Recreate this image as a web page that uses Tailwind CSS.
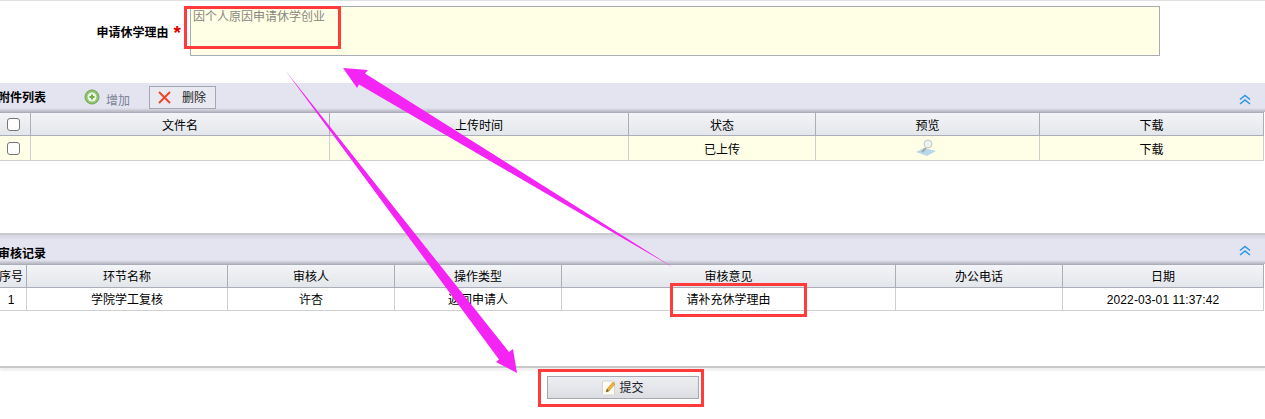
<!DOCTYPE html>
<html lang="zh-CN">
<head>
    <meta charset="UTF-8" />
    <meta name="viewport" content="width=device-width, initial-scale=1.0" />
    <title>休学申请</title>
    <script src="https://cdn.jsdelivr.net/npm/@tailwindcss/browser@4"></script>
</head>
<body class="bg-white">
<div class="relative w-[1265px] h-[419px] overflow-hidden bg-white text-black text-[12px] leading-[16px] font-['Liberation_Sans','Noto_Sans_CJK_SC',sans-serif]">

    <!-- form row -->
    <div class="h-px bg-[#e0e0e0]"></div>
    <div class="flex mt-[5px] h-[50px]">
        <div class="w-[190px] shrink-0 flex justify-end items-center pr-[9px] pt-[3px]">
            <span class="font-bold mr-[5px]">申请休学理由</span>
            <span class="text-[#e00000] font-bold text-[19px] leading-[16px] mt-[1px]">*</span>
        </div>
        <textarea class="w-[970px] h-[50px] resize-none border border-[#a9abb5] bg-[#ffffe6] pl-[2px] pr-[3px] pt-[2px] text-[#888880] text-[12px] leading-[16px] outline-none">因个人原因申请休学创业</textarea>
    </div>

    <!-- attachments -->
    <div class="mt-[27px] h-[29px] flex items-center bg-[#e4e4f0] bg-[linear-gradient(to_bottom,#e4e4f0_0,#e4e4f0_25px,#b5b5c0_29px)] pr-[14px]">
        <span class="w-[46px] -ml-[2px] mr-[40px] font-bold text-right whitespace-nowrap">附件列表</span>
        <svg class="w-[16px] h-[16px] -mt-[1px] mr-[6px]" viewBox="0 0 16 16">
            <circle cx="8" cy="8" r="7" fill="#8fc46f" stroke="#6fa552" />
            <circle cx="8" cy="8" r="4.5" fill="#eef7e6" />
            <path d="M8 5.5v5M5.5 8h5" stroke="#6fae4c" stroke-width="2" />
        </svg>
        <span class="mt-[7px] text-[#7d8296]">增加</span>
        <button class="ml-[19px] w-[67px] h-[23px] flex items-center border border-[#a5a7b2] bg-[#e9e9f1] pl-[7px] text-[#222]">
            <svg class="w-[15px] h-[15px]" viewBox="0 0 15 15"><path d="M2 2l11 11M13 2L2 13" stroke="#f0452a" stroke-width="2" /></svg>
            <span class="ml-[10px]">删除</span>
        </button>
        <svg class="w-[12px] h-[11px] ml-auto mt-[3px]" viewBox="0 0 12 11" fill="none" stroke="#2a94e6" stroke-width="1.5">
            <path d="M1 5.5l5-4 5 4M1 10l5-4 5 4" />
        </svg>
    </div>
    <div class="w-[1268px] -ml-[4px]">
        <div class="grid grid-cols-[35px_299px_299px_187px_224px_224px] grid-rows-[22px] h-[24px] border-t border-b border-[#abaeb8] bg-[linear-gradient(to_bottom,#f3f4f8,#e3e6ea)] text-center leading-[26px]">
            <div class="flex items-center justify-center border-r border-[#abaeb8]"><span class="w-[13px] h-[13px] rounded-[3px] border border-[#777] bg-white"></span></div>
            <div class="border-r border-[#abaeb8]">文件名</div>
            <div class="border-r border-[#abaeb8]">上传时间</div>
            <div class="border-r border-[#abaeb8]">状态</div>
            <div class="border-r border-[#abaeb8]">预览</div>
            <div class="border-r border-[#abaeb8]">下载</div>
        </div>
        <div class="grid grid-cols-[35px_299px_299px_187px_224px_224px] grid-rows-[24px] h-[25px] border-b border-[#cfcfcf] bg-[#ffffe8] text-center leading-[28px]">
            <div class="flex items-center justify-center border-r border-[#cfcfcf]"><span class="w-[13px] h-[13px] rounded-[3px] border border-[#777] bg-white"></span></div>
            <div class="border-r border-[#cfcfcf]"></div>
            <div class="border-r border-[#cfcfcf]"></div>
            <div class="border-r border-[#cfcfcf]">已上传</div>
            <div class="flex items-center justify-center pr-[3px] border-r border-[#cfcfcf]">
                <svg class="w-[20px] h-[18px]" viewBox="0 0 20 18">
                    <path d="M0 13l8-4 12 3-9 5z" fill="#b5d8ea" />
                    <path d="M6 13l4-4" stroke="#a8a8a8" stroke-width="2" />
                    <circle cx="12" cy="5" r="4" fill="#eef2ee" stroke="#c2c8c2" />
                </svg>
            </div>
            <div class="border-r border-[#cfcfcf]">下载</div>
        </div>
    </div>

    <!-- audit records -->
    <div class="mt-[72px] h-[31px] flex items-center border-t-2 border-[#c9c9cf] bg-[linear-gradient(to_bottom,#d5d5e0_0,#e4e4f0_5px,#e4e4f0_25px,#b5b5c0_29px)] pr-[14px]">
        <span class="-ml-[2px] mt-[8px] font-bold whitespace-nowrap">审核记录</span>
        <svg class="w-[12px] h-[11px] ml-auto mt-[2px]" viewBox="0 0 12 11" fill="none" stroke="#2a94e6" stroke-width="1.5">
            <path d="M1 5.5l5-4 5 4M1 10l5-4 5 4" />
        </svg>
    </div>
    <div class="w-[1268px] -ml-[4px]">
        <div class="grid grid-cols-[31px_201px_167px_167px_334px_167px_201px] grid-rows-[22px] h-[24px] border-t border-b border-[#abaeb8] bg-[linear-gradient(to_bottom,#f3f4f8,#e3e6ea)] text-center leading-[25px]">
            <div class="border-r border-[#abaeb8]">序号</div>
            <div class="border-r border-[#abaeb8]">环节名称</div>
            <div class="border-r border-[#abaeb8]">审核人</div>
            <div class="border-r border-[#abaeb8]">操作类型</div>
            <div class="border-r border-[#abaeb8]">审核意见</div>
            <div class="border-r border-[#abaeb8]">办公电话</div>
            <div class="border-r border-[#abaeb8]">日期</div>
        </div>
        <div class="grid grid-cols-[31px_201px_167px_167px_334px_167px_201px] grid-rows-[22px] h-[23px] border-b border-[#cfcfcf] text-center leading-[25px]">
            <div class="border-r border-[#cfcfcf]">1</div>
            <div class="border-r border-[#cfcfcf]">学院学工复核</div>
            <div class="border-r border-[#cfcfcf]">许杏</div>
            <div class="border-r border-[#cfcfcf]">返回申请人</div>
            <div class="border-r border-[#cfcfcf]">请补充休学理由</div>
            <div class="border-r border-[#cfcfcf]"></div>
            <div class="border-r border-[#cfcfcf] tracking-[0.1px]">2022-03-01 11:37:42</div>
        </div>
    </div>

    <!-- footer -->
    <div class="mt-[55px] h-[2px] bg-[#c8c8c8] shadow-[0_2px_3px_rgba(0,0,0,0.12)]"></div>
    <div class="flex justify-center mt-[8px]">
        <button class="w-[152px] h-[23px] -ml-[19px] pt-[1px] flex items-center justify-center border border-[#a5a7b2] bg-[linear-gradient(to_bottom,#eceef1,#dcdee3)] text-[#1c1c28]">
            <svg class="w-[15px] h-[16px] mr-[2px]" viewBox="0 0 15 16">
                <rect x="0.5" y="1" width="12" height="14" rx="1" fill="#fdfcf2" stroke="#d6d6d0" />
                <path d="M4 12l1-3 6-7 2 2-6 7z" fill="#f0b43c" stroke="#c08a30" stroke-width="0.6" />
                <path d="M4 12l1-3 2 2z" fill="#6b5a40" />
            </svg>
            <span>提交</span>
        </button>
    </div>

    <!-- annotations drawn over the page -->
    <div class="absolute left-[184px] top-[6px] w-[157px] h-[43px] border-[3px] border-[#ff3b3b]"></div>
    <div class="absolute left-[670px] top-[283px] w-[137px] h-[34px] border-[3px] border-[#ff3b3b]"></div>
    <div class="absolute left-[538px] top-[369px] w-[166px] h-[38px] border-[3px] border-[#ff3b3b]"></div>
    <svg class="absolute left-0 top-0 w-[1265px] h-[419px] pointer-events-none" viewBox="0 0 1265 419">
        <polygon points="343,68 368,70 365,73.5 674,268 359,84.5 357,88" fill="#f424f4" />
        <polygon points="285,70 509,352 513,349 517,373 496,362 499,359.5" fill="#f424f4" />
    </svg>
</div>
</body>
</html>
